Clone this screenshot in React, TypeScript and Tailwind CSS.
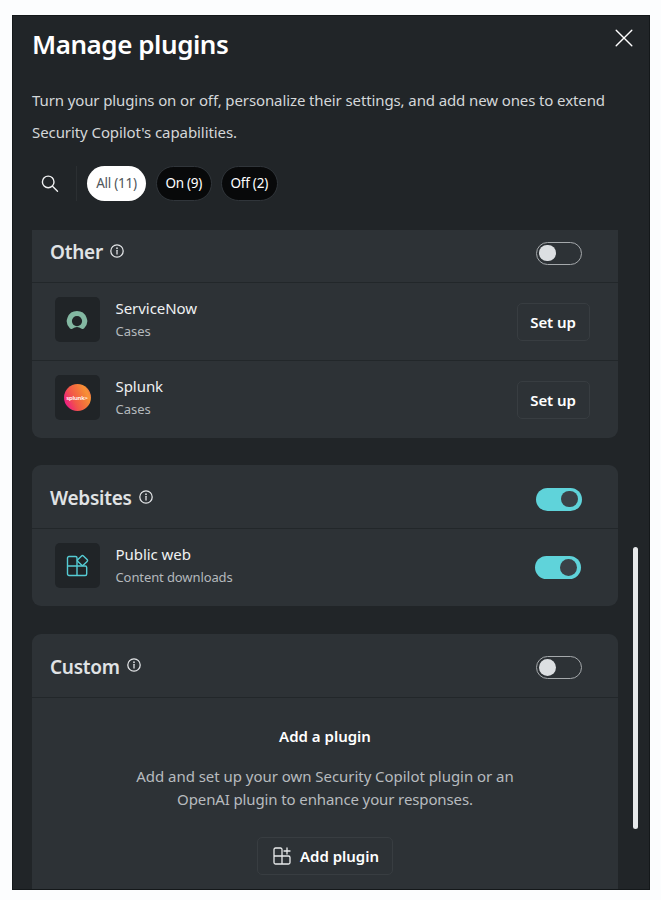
import type { ReactNode } from "react";

function InfoIcon() {
  return (
    <svg className="-mt-[3px]" width="14" height="14" viewBox="0 0 14 14" fill="none" stroke="#e4e6e8" strokeWidth="1.25">
      <circle cx="7" cy="7" r="6.2" />
      <path d="M7 6.3v3.8" strokeLinecap="round" />
      <circle cx="7" cy="4.2" r="0.85" fill="#e4e6e8" stroke="none" />
    </svg>
  );
}

function Toggle({ on = false }: { on?: boolean }) {
  return on ? (
    <div className="flex h-[23px] w-[45.5px] items-center justify-end rounded-full bg-[#5fd3da] pr-[4px]">
      <div className="size-[16.5px] rounded-full bg-[#3a4147]" />
    </div>
  ) : (
    <div className="flex h-[23px] w-[45.5px] items-center rounded-full border border-[#a5a9ac] pl-[2px]">
      <div className="size-[16.5px] rounded-full bg-[#dcdfe2]" />
    </div>
  );
}

function CardHeader({ title, on, className }: { title: string; on?: boolean; className: string }) {
  return (
    <div className={"flex items-center justify-between border-b border-[#22272a] pr-[36.5px] pl-[18px] " + className}>
      <div className="-mt-[2px] flex items-center gap-[7px]">
        <h2 className="text-[19px] leading-7 font-semibold tracking-[-0.25px] text-[#e0e3e5]">{title}</h2>
        <InfoIcon />
      </div>
      <Toggle on={on} />
    </div>
  );
}

function Row({ icon, name, detail, action, className }: { icon: ReactNode; name: string; detail: ReactNode; action: ReactNode; className: string }) {
  return (
    <div className={"flex items-start pl-[22.5px] " + className}>
      <div className="mt-[14px] flex size-[45px] items-center justify-center rounded-[5px] bg-[#202427]">{icon}</div>
      <div className="mt-[14px] ml-4 flex-1 whitespace-nowrap">
        <div className="text-[15px] leading-[23px] tracking-[-0.05px] text-[#eff1f2]">{name}</div>
        <div className="text-[13px] leading-[22px] text-[#b4b9bd]">{detail}</div>
      </div>
      {action}
    </div>
  );
}

function SetUp() {
  return (
    <button className="mt-5 mr-7 h-[38px] w-[73px] rounded-[5px] border border-[#383d41] pr-px text-[15px] font-semibold tracking-[-0.1px] whitespace-nowrap text-white">
      Set up
    </button>
  );
}

function ServiceNowLogo() {
  return (
    <svg width="22" height="20" viewBox="0 0 22 20">
      <path
        d="M11 1A10.2 10.2 0 0 0 4 18.6c.7.6 1.6.6 2.4.1a7.8 7.8 0 0 1 9.2 0c.8.5 1.7.5 2.4-.1A10.2 10.2 0 0 0 11 1Zm0 15.2a5.1 5.1 0 1 1 0-10.2 5.1 5.1 0 0 1 0 10.2Z"
        fill="#83b8a2"
      />
    </svg>
  );
}

function SplunkLogo() {
  return (
    <div className="flex size-[27px] items-center justify-center rounded-full bg-linear-[65deg,#ec148c_8%,#f2554a_38%,#f4743b_60%,#f79235_80%,#ef5060]">
      <span className="text-[6px] leading-none font-semibold tracking-[-0.25px] text-white">splunk&gt;</span>
    </div>
  );
}

function AppsIcon() {
  return (
    <svg width="23" height="23" viewBox="0 0 23 23" fill="none" stroke="#55cbd3" strokeWidth="1.4" strokeLinejoin="round">
      <path d="M11 12H1.5M11 3.5V21.5M11 12h8.2a1.5 1.5 0 0 1 1.5 1.5V20a1.5 1.5 0 0 1-1.5 1.5H3A1.5 1.5 0 0 1 1.5 20V4A1.5 1.5 0 0 1 3 2.5h6.5A1.5 1.5 0 0 1 11 4" />
      <rect x="12.6" y="2.6" width="7.8" height="7.8" rx="1.3" transform="rotate(45 16.5 6.5)" />
    </svg>
  );
}

export default function App() {
  return (
    <div className="h-[900px] bg-[#fcfdfe] pt-[15px] pl-[12px] font-['Noto_Sans','Open_Sans',sans-serif]">
      <div className="flex h-[875px] w-[638px] flex-col overflow-hidden border border-[#14181a] bg-[#212528]">
        <header className="flex h-12 shrink-0 justify-between pt-[10px] pr-4 pl-[19px]">
          <h1 className="text-[26px] leading-[36px] font-semibold tracking-[-0.45px] text-white">Manage plugins</h1>
          <svg className="mt-[3px]" width="18" height="18" viewBox="0 0 18 18" stroke="#fff" strokeWidth="1.4" strokeLinecap="round">
            <path d="M1.2 1.2l15.6 15.6M16.8 1.2L1.2 16.8" />
          </svg>
        </header>
        <p className="mt-[20px] pl-[19px] text-[15px] leading-[32px] whitespace-nowrap text-[#d4d7d9]">
          <span className="tracking-[-0.11px]">Turn your plugins on or off, personalize their settings, and add new ones to extend</span>
          <br />
          <span className="tracking-[-0.08px]">Security Copilot&apos;s capabilities.</span>
        </p>
        <div className="mt-[18px] flex h-[35px] shrink-0 items-center pl-7 text-[13.5px] tracking-[-0.25px] whitespace-nowrap">
          <svg width="18" height="18" viewBox="0 0 18 18" fill="none" stroke="#f0f1f2" strokeWidth="1.4" strokeLinecap="round">
            <circle cx="7.2" cy="6.9" r="5.8" />
            <path d="M11.5 11.2l5 5" />
          </svg>
          <div className="ml-[17px] h-[35px] w-px bg-[#2b2f32]" />
          <div className="ml-[10px] flex h-[35px] w-[59px] items-center justify-center rounded-full bg-white text-[#50565b]">All (11)</div>
          <div className="ml-[9.5px] flex h-[35px] w-[56.5px] items-center justify-center rounded-full border border-[#30353a] bg-[#08090a] text-white">On (9)</div>
          <div className="ml-[9px] flex h-[35px] w-[56.5px] items-center justify-center rounded-full border border-[#30353a] bg-[#08090a] text-white">Off (2)</div>
        </div>
        <div className="mt-[29px] ml-[19px] flex">
          <main className="flex w-[586px] flex-col">
            <section className="h-[208px] rounded-b-[9px] bg-[#2d3236]">
              <CardHeader className="h-[53px] pb-[6px]" title="Other" />
              <Row className="h-[78px] border-b border-[#22272a]" icon={<ServiceNowLogo />} name="ServiceNow" detail="Cases" action={<SetUp />} />
              <Row className="h-[77px]" icon={<SplunkLogo />} name="Splunk" detail="Cases" action={<SetUp />} />
            </section>
            <section className="mt-[27px] h-[141px] rounded-[9px] bg-[#2d3236]">
              <CardHeader className="h-[64px] pt-[5px]" on title="Websites" />
              <Row
                className="h-[77px]"
                icon={<AppsIcon />}
                name="Public web"
                detail={<span className="tracking-[-0.1px]">Content downloads</span>}
                action={
                  <div className="mt-[27px] mr-[37.5px]">
                    <Toggle on />
                  </div>
                }
              />
            </section>
            <section className="mt-7 flex h-[255px] flex-col rounded-t-[9px] bg-[#2d3236]">
              <CardHeader className="h-[64px] shrink-0 pt-1" title="Custom" />
              <div className="flex flex-col items-center whitespace-nowrap">
                <h3 className="mt-[27px] text-[15px] leading-[23px] font-semibold text-white">Add a plugin</h3>
                <p className="mt-[17px] text-center text-[15px] leading-[23px] text-[#b7bbbf]">
                  <span className="tracking-[-0.04px]">Add and set up your own Security Copilot plugin or an</span>
                  <br />
                  <span className="tracking-[-0.12px]">OpenAI plugin to enhance your responses.</span>
                </p>
                <button className="mt-[26px] flex h-[38px] w-[136px] items-center justify-center gap-[9px] rounded-[5px] border border-[#383d41] pl-[2px] text-[15px] font-semibold text-white">
                  <svg width="18" height="18" viewBox="0 0 18 18" fill="none" stroke="#e8eaeb" strokeWidth="1.3" strokeLinecap="round" strokeLinejoin="round">
                    <path d="M9 9H1M9 9V17M9 9V2.5A1.5 1.5 0 0 0 7.5 1h-5A1.5 1.5 0 0 0 1 2.5v13A1.5 1.5 0 0 0 2.5 17h13a1.5 1.5 0 0 0 1.5-1.5v-5A1.5 1.5 0 0 0 15.5 9Z" />
                    <path d="M14 1v6M11 4h6" />
                  </svg>
                  Add plugin
                </button>
              </div>
            </section>
          </main>
          <div className="mt-[317px] ml-[15px] h-[282px] w-[5px] rounded-full bg-[#e6e8ea]" />
        </div>
      </div>
    </div>
  );
}
